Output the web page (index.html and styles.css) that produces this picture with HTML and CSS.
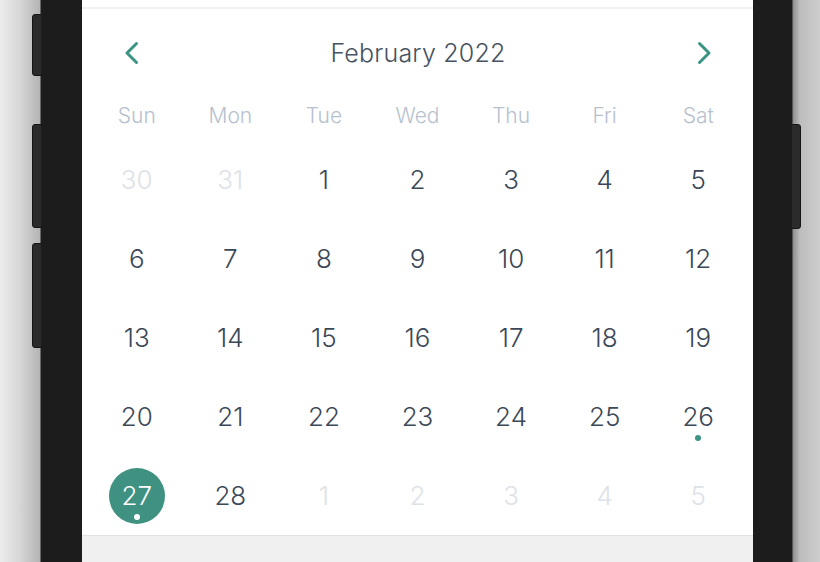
FILE: index.html
```html
<!DOCTYPE html>
<html lang="en">
<head>
<meta charset="utf-8">
<title>Calendar</title>
<link rel="stylesheet" href="styles.css">
</head>
<body>
<div class="device">
  <span class="side-btn btn-l1"></span>
  <span class="side-btn btn-l2"></span>
  <span class="side-btn btn-l3"></span>
  <span class="side-btn btn-r1"></span>
  <div class="phone">
    <div class="screen">
      <div class="topbar"></div>
      <section class="calendar">
        <header class="cal-head">
          <button class="nav" aria-label="Previous month">
            <svg width="16" height="24" viewBox="0 0 16 24"><path d="M12.5 2.5 L3 12 L12.5 21.5" fill="none" stroke="#3a9383" stroke-width="3" stroke-linecap="round" stroke-linejoin="round"/></svg>
          </button>
          <h1 class="month">February 2022</h1>
          <button class="nav" aria-label="Next month">
            <svg width="16" height="24" viewBox="0 0 16 24"><path d="M3.5 2.5 L13 12 L3.5 21.5" fill="none" stroke="#3a9383" stroke-width="3" stroke-linecap="round" stroke-linejoin="round"/></svg>
          </button>
        </header>
        <div class="weekdays">
          <span>Sun</span><span>Mon</span><span>Tue</span><span>Wed</span><span>Thu</span><span>Fri</span><span>Sat</span>
        </div>
        <div class="days">
          <div class="day muted"><span class="num">30</span></div>
          <div class="day muted"><span class="num">31</span></div>
          <div class="day"><span class="num">1</span></div>
          <div class="day"><span class="num">2</span></div>
          <div class="day"><span class="num">3</span></div>
          <div class="day"><span class="num">4</span></div>
          <div class="day"><span class="num">5</span></div>
          <div class="day"><span class="num">6</span></div>
          <div class="day"><span class="num">7</span></div>
          <div class="day"><span class="num">8</span></div>
          <div class="day"><span class="num">9</span></div>
          <div class="day"><span class="num">10</span></div>
          <div class="day"><span class="num">11</span></div>
          <div class="day"><span class="num">12</span></div>
          <div class="day"><span class="num">13</span></div>
          <div class="day"><span class="num">14</span></div>
          <div class="day"><span class="num">15</span></div>
          <div class="day"><span class="num">16</span></div>
          <div class="day"><span class="num">17</span></div>
          <div class="day"><span class="num">18</span></div>
          <div class="day"><span class="num">19</span></div>
          <div class="day"><span class="num">20</span></div>
          <div class="day"><span class="num">21</span></div>
          <div class="day"><span class="num">22</span></div>
          <div class="day"><span class="num">23</span></div>
          <div class="day"><span class="num">24</span></div>
          <div class="day"><span class="num">25</span></div>
          <div class="day event"><span class="num">26</span></div>
          <div class="day selected event"><span class="num">27</span></div>
          <div class="day"><span class="num">28</span></div>
          <div class="day muted"><span class="num">1</span></div>
          <div class="day muted"><span class="num">2</span></div>
          <div class="day muted"><span class="num">3</span></div>
          <div class="day muted"><span class="num">4</span></div>
          <div class="day muted"><span class="num">5</span></div>
        </div>
      </section>
      <div class="below"></div>
    </div>
  </div>
</div>
</body>
</html>
```

FILE: styles.css
```css
* { box-sizing: border-box; }

html, body {
  margin: 0;
  padding: 0;
}

body {
  width: 820px;
  height: 562px;
  overflow: hidden;
  font-family: Inter, "Liberation Sans", sans-serif;
  background: linear-gradient(to right, #ececec 0px, #d6d6d6 20px, #b4b4b4 40px, #1c1c1c 41px, #1c1c1c 792px, #8e8e8e 793px, #bdbdbd 800px, #cdcdcd 820px);
}

.device {
  position: relative;
  width: 820px;
  height: 562px;
  display: flex;
}

.side-btn {
  position: absolute;
  width: 12px;
  background: #2b2b2b;
  border: 1px solid #161616;
  border-radius: 3px;
}
.btn-l1 { left: 32px; top: 14px; height: 62px; }
.btn-l2 { left: 32px; top: 124px; height: 104px; }
.btn-l3 { left: 32px; top: 243px; height: 105px; }
.btn-r1 { left: 790px; top: 124px; height: 105px; width: 11px; }

.phone {
  margin-left: 41px;
  width: 751px;
  height: 562px;
  background: #1c1c1c;
  padding: 0 39px 0 41px;
  position: relative;
  z-index: 1;
}

.screen {
  height: 100%;
  display: flex;
  flex-direction: column;
  background: #f0f0f0;
}

.topbar {
  height: 9px;
  background: #fff;
  border-bottom: 2px solid #f2f2f2;
  flex: none;
}

.calendar {
  background: #fff;
  padding: 0 8px;
  border-bottom: 1px solid #e2e2e2;
  flex: none;
}

.cal-head {
  height: 84px;
  display: flex;
  align-items: center;
  justify-content: space-between;
  padding: 3px 21px 0 22px;
}

.nav {
  width: 40px;
  height: 40px;
  border: 0;
  padding: 0;
  background: none;
  display: flex;
  align-items: center;
  justify-content: center;
}

.month {
  margin: 0;
  font-size: 25px;
  font-weight: 300;
  color: #46525f;
  letter-spacing: 0.2px;
}

.weekdays {
  display: grid;
  grid-template-columns: repeat(7, 1fr);
  height: 47px;
  align-items: center;
  padding-bottom: 3px;
}
.weekdays span {
  text-align: center;
  font-size: 21px;
  font-weight: 300;
  color: #b6c1ce;
}

.days {
  display: grid;
  grid-template-columns: repeat(7, 1fr);
  grid-auto-rows: 79px;
}

.day {
  display: flex;
  align-items: center;
  justify-content: center;
}

.num {
  position: relative;
  display: flex;
  align-items: center;
  justify-content: center;
  width: 56px;
  height: 56px;
  border-radius: 50%;
  font-size: 26px;
  font-weight: 300;
  color: #3b4857;
}

.day.muted .num { color: #dde2e8; }

.day.event .num::after {
  content: "";
  position: absolute;
  left: 50%;
  top: 46px;
  width: 6px;
  height: 6px;
  margin-left: -3px;
  border-radius: 50%;
  background: #3a9383;
}

.day.selected .num {
  background: #3f9282;
  color: #fff;
}
.day.selected .num::after {
  background: #fff;
  top: 46px;
}

.below {
  flex: 1;
  background: #f0f0f0;
}
```
